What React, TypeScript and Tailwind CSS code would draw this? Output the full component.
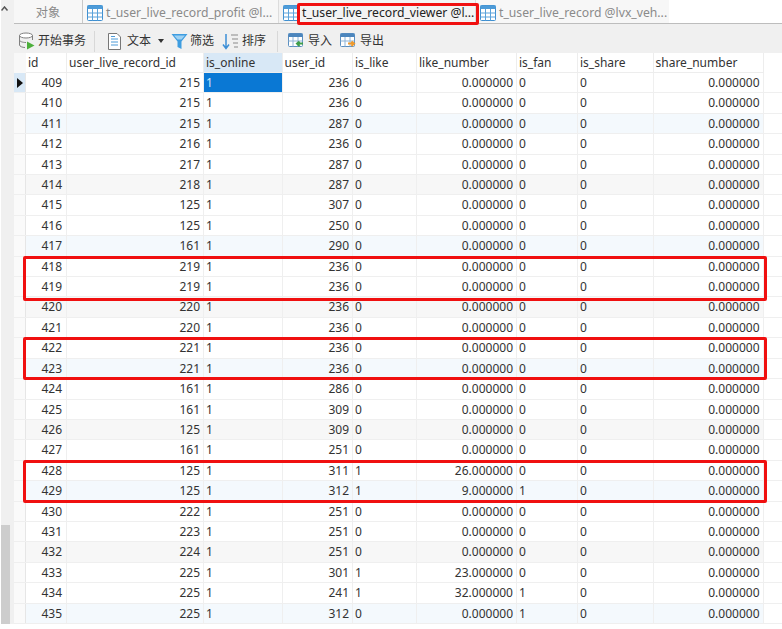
const cols = [41, 137, 78.5, 70.5, 64, 100, 61, 75.5, 110];
const hdr = ["id", "user_live_record_id", "is_online", "user_id", "is_like", "like_number", "is_fan", "is_share", "share_number"];
const rows: [number, number, number, number, string, number][] = [
  [409, 215, 236, 0, "0.000000", 0], [410, 215, 236, 0, "0.000000", 0], [411, 215, 287, 0, "0.000000", 0],
  [412, 216, 236, 0, "0.000000", 0], [413, 217, 287, 0, "0.000000", 0], [414, 218, 287, 0, "0.000000", 0],
  [415, 125, 307, 0, "0.000000", 0], [416, 125, 250, 0, "0.000000", 0], [417, 161, 290, 0, "0.000000", 0],
  [418, 219, 236, 0, "0.000000", 0], [419, 219, 236, 0, "0.000000", 0], [420, 220, 236, 0, "0.000000", 0],
  [421, 220, 236, 0, "0.000000", 0], [422, 221, 236, 0, "0.000000", 0], [423, 221, 236, 0, "0.000000", 0],
  [424, 161, 286, 0, "0.000000", 0], [425, 161, 309, 0, "0.000000", 0], [426, 125, 309, 0, "0.000000", 0],
  [427, 161, 251, 0, "0.000000", 0], [428, 125, 311, 1, "26.000000", 0], [429, 125, 312, 1, "9.000000", 1],
  [430, 222, 251, 0, "0.000000", 0], [431, 223, 251, 0, "0.000000", 0], [432, 224, 251, 0, "0.000000", 0],
  [433, 225, 301, 1, "23.000000", 0], [434, 225, 241, 1, "32.000000", 1], [435, 225, 312, 0, "0.000000", 1],
];

function TableIcon() {
  return (
    <svg width="16" height="16" viewBox="0 0 16 16" className="shrink-0">
      <rect x="0.5" y="0.5" width="15" height="15" rx="1" fill="#fff" stroke="#3f8fd0" />
      <rect x="0.5" y="0.5" width="15" height="3.5" fill="#4d9bd8" />
      <path d="M0.5 8H15.5M0.5 12H15.5M5.5 4V15.5M10.5 4V15.5" stroke="#5aa2da" strokeWidth="1" />
    </svg>
  );
}

function ToolTable({ accent, arrow }: { accent: string; arrow: string }) {
  return (
    <svg width="17" height="16" viewBox="0 0 17 16" className="shrink-0">
      <rect x="0.5" y="0.5" width="14" height="13" rx="1" fill="#fff" stroke="#5b8fc0" />
      <rect x="0.5" y="0.5" width="14" height="3.5" fill="#4c86bd" />
      <path d="M0.5 8H14.5M5 4V13.5M10 4V13.5" stroke="#8fb4d6" />
      <path d={arrow} fill="none" stroke={accent} strokeWidth="2" />
    </svg>
  );
}

function Tab({ label, active, className }: { label: string; active?: boolean; className: string }) {
  return (
    <div className={`flex items-center h-[23px] pt-[3px] gap-[2px] pl-[4px] border-r border-[#dcdcdc] ${className}`}>
      <TableIcon />
      <span className={`whitespace-nowrap ml-[1px] ${active ? "text-[#222]" : "text-[#8a8a8a]"}`}>{label}</span>
    </div>
  );
}

export default function App() {
  return (
    <div className="relative w-[782px] h-[629px] bg-white flex overflow-hidden text-[12px] text-[#333]" style={{ fontFamily: '"Noto Sans","Noto Sans CJK SC",sans-serif' }}>
      <div className="w-[14px] h-[624px] bg-[#f0f0f0] flex flex-col justify-between shrink-0 border-l border-white">
        <svg width="8" height="6" viewBox="0 0 8 6" className="mt-[6px]">
          <path d="M0.5 4.5L3.5 1L6.5 4.5" fill="none" stroke="#555" strokeWidth="1.5" />
        </svg>
        <div className="w-[9px] h-[99px] bg-[#cdcdcd]" />
      </div>
      <div className="flex-1 flex flex-col min-w-0">
        <div className="flex h-[24px] border-b border-[#bdbdbd] text-[12.2px]">
          <div className="w-[69px] h-[23px] pt-[3px] bg-[#f7f7f7] border-r border-[#c8c8c8] flex items-center justify-center text-[#8a8a8a]">对象</div>
          <Tab label="t_user_live_record_profit @l..." className="w-[196px] bg-[#f7f7f7]" />
          <Tab label="t_user_live_record_viewer @l..." active className="w-[197px] bg-[#f3f3f3]" />
          <Tab label="t_user_live_record @lvx_veh..." className="w-[193px] bg-[#f7f7f7] border-r-0 pl-[1px]" />
        </div>
        <div className="flex items-center h-[29px] pt-[5px] bg-[#f0f0f0] text-[12px] text-[#333] pl-[4px]">
          <div className="flex items-center gap-[2px] w-[71px]">
            <svg width="18" height="18" viewBox="0 0 18 18" className="shrink-0">
              <ellipse cx="8" cy="3.5" rx="6.5" ry="2.5" fill="#fff" stroke="#808080" />
              <path d="M1.5 3.5V13c0 1.4 3 2.5 5.5 2.5M14.5 3.5V8M1.5 8c0 1.4 3 2.5 6.5 2.5" fill="none" stroke="#808080" />
              <path d="M9 9.5L16.5 13.5L9 17.5Z" fill="#4caf3c" />
            </svg>
            <span className="whitespace-nowrap">开始事务</span>
          </div>
          <div className="w-px h-[21px] bg-[#d8d8d8] ml-[5px] mr-[12px]" />
          <svg width="15" height="17" viewBox="0 0 15 17" className="shrink-0 mr-[5px]">
            <path d="M1.5 0.5H10L13.5 4V16.5H1.5Z" fill="#fff" stroke="#777" />
            <path d="M4 6H11M4 9H11M4 12H11M4 3.5H8" stroke="#4d9bd8" />
          </svg>
          <span className="whitespace-nowrap">文本</span>
          <svg width="6" height="4" viewBox="0 0 6 4" className="ml-[7px] mr-[7px]"><path d="M0 0H6L3 4Z" fill="#333" /></svg>
          <svg width="17" height="17" viewBox="0 0 17 17" className="shrink-0 mr-[2px]">
            <path d="M0.5 1H16.5L10.5 8.5V16L6.5 14V8.5Z" fill="#3f9de0" />
            <path d="M3 2.5H14L10.5 6.5H6.5Z" fill="#9fd2f3" />
          </svg>
          <span className="whitespace-nowrap">筛选</span>
          <svg width="17" height="17" viewBox="0 0 17 17" className="shrink-0 ml-[8px] mr-[3px]">
            <path d="M4 1V15M1 11.5L4 15.5L7 11.5" fill="none" stroke="#3d8fd6" strokeWidth="1.5" />
            <path d="M9 2H16M10 6H16M11 10H16M12 14H16" stroke="#8a8a8a" />
          </svg>
          <span className="whitespace-nowrap">排序</span>
          <div className="w-px h-[21px] bg-[#d8d8d8] ml-[11px] mr-[10px]" />
          <ToolTable accent="#3f9e4a" arrow="M15 10.5H9.5M11.5 8.5L9 10.5L11.5 13" />
          <span className="whitespace-nowrap ml-[3px]">导入</span>
          <div className="w-[8px]" />
          <ToolTable accent="#ef9a2d" arrow="M8 10.5H13.5M11.5 8.5L14 10.5L11.5 13" />
          <span className="whitespace-nowrap ml-[3px]">导出</span>
        </div>
        <div className="flex h-[20px]">
          <div className="w-[12px] shrink-0 bg-[#f8f8f8]" />
          {hdr.map((h, i) => (
            <div key={h} style={{ width: cols[i] }} className={`shrink-0 pl-[2px] leading-[19px] border-r border-[#ededed] border-b ${i === 2 ? "bg-[#d8e8f6]" : "bg-white"}`}>{h}</div>
          ))}
        </div>
        {rows.map((r, idx) => {
          const bg = idx % 3 !== 2 ? "bg-white" : idx % 6 === 2 ? "bg-[#f4f9fd]" : "bg-[#f7f7f7]";
          const cell = "shrink-0 leading-[20.4px] border-r border-[#efefef] whitespace-nowrap";
          return (
            <div key={r[0]} className="flex h-[20.42px] border-b border-[#efefef]">
              <div className={`w-[12px] shrink-0 border-r border-[#e6e6e6] flex items-center justify-center ${idx === 0 ? "bg-[#d8e8f6]" : "bg-[#fafafa]"}`}>
                {idx === 0 && <svg width="6" height="10" viewBox="0 0 6 10"><path d="M0 0L6 5L0 10Z" fill="#111" /></svg>}
              </div>
              <div style={{ width: cols[0] }} className={`${cell} ${bg} text-right pr-[4px]`}>{r[0]}</div>
              <div style={{ width: cols[1] }} className={`${cell} ${bg} text-right pr-[3px]`}>{r[1]}</div>
              <div style={{ width: cols[2] }} className={`${cell} pl-[2px] ${idx === 0 ? "bg-[#0a78d4] text-[#cfe6f8]" : bg}`}>1</div>
              <div style={{ width: cols[3] }} className={`${cell} ${bg} text-right pr-[3px]`}>{r[2]}</div>
              <div style={{ width: cols[4] }} className={`${cell} ${bg} pl-[2px]`}>{r[3]}</div>
              <div style={{ width: cols[5] }} className={`${cell} ${bg} text-right pr-[3px]`}>{r[4]}</div>
              <div style={{ width: cols[6] }} className={`${cell} ${bg} pl-[2px]`}>{r[5]}</div>
              <div style={{ width: cols[7] }} className={`${cell} ${bg} pl-[2px]`}>0</div>
              <div style={{ width: cols[8] }} className={`${cell} ${bg} text-right pr-[3px]`}>0.000000</div>
            </div>
          );
        })}
      </div>
      <div className="absolute left-[297px] top-[3px] w-[182px] h-[22px] border-[3px] border-[#f01010] rounded-[2px]" />
      <div className="absolute left-[23px] top-[256px] w-[744px] h-[45px] border-[3px] border-[#f01010] rounded-[2px]" />
      <div className="absolute left-[23px] top-[337px] w-[744px] h-[43px] border-[3px] border-[#f01010] rounded-[2px]" />
      <div className="absolute left-[23px] top-[460px] w-[744px] h-[43px] border-[3px] border-[#f01010] rounded-[2px]" />
    </div>
  );
}
